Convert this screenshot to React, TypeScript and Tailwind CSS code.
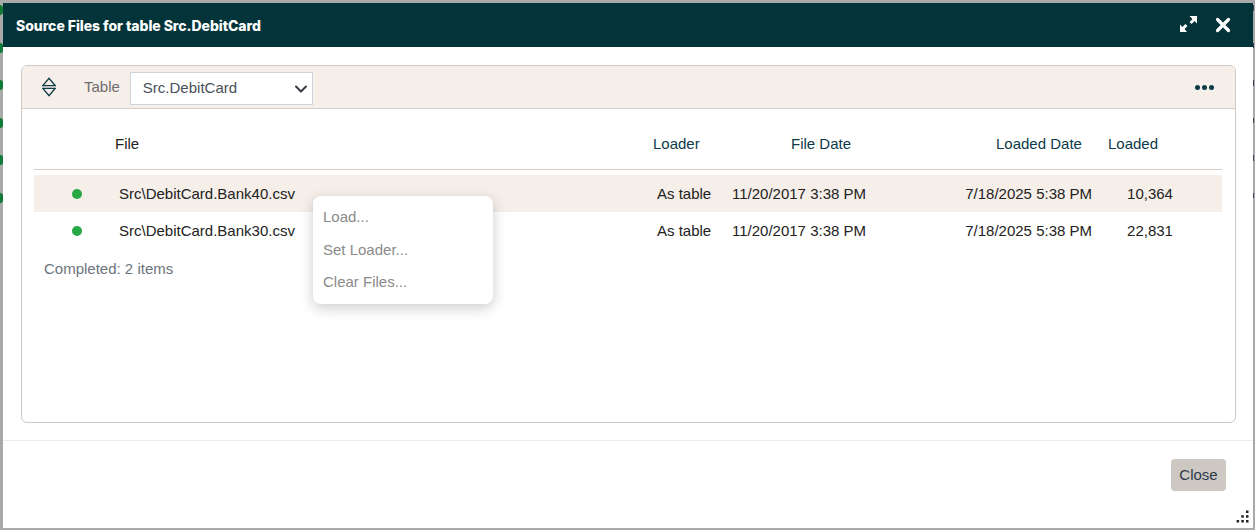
import React from "react";

const grid = "grid grid-cols-[77px_538px_79px_234px_138px_80px_1fr]";

function Row({ file, count, selected }: { file: string; count: string; selected?: boolean }) {
  return (
    <div className={`${grid} h-[37px] items-center text-[#222222] ${selected ? "bg-[#f5eee9]" : ""}`}>
      <div className="flex justify-center pl-[9px]">
        <span className="h-[10px] w-[10px] rounded-full bg-[#28a745]" />
      </div>
      <div className="pl-[8px] pt-[2px]">{file}</div>
      <div className="pl-[8px] pt-[2px]">As table</div>
      <div className="pl-[4px] pt-[2px]">11/20/2017 3:38 PM</div>
      <div className="whitespace-nowrap pr-[8px] pt-[2px] text-right">7/18/2025 5:38 PM</div>
      <div className="pl-[20px] pt-[2px] text-center">{count}</div>
      <div />
    </div>
  );
}

export default function App() {
  return (
    <div className="relative h-[530px] w-[1255px] overflow-hidden bg-[#a9a9a9] font-['Liberation_Sans',Arial,sans-serif] text-[15px]">
      <div className="absolute left-0 top-[5px] flex flex-col gap-[27.6px]">
        {[0, 1, 2, 3, 4, 5].map((i) => (
          <span key={i} className="block h-[10px] w-[3px] rounded-r-full bg-[#0f7a36]" />
        ))}
      </div>
      <div className="absolute right-[1px] top-[5px] flex flex-col gap-[32px]">
        {[0, 1, 2, 3, 4, 5].map((i) => (
          <span key={i} className="block h-[5.5px] w-[1px] bg-[#3a3f5c]" />
        ))}
      </div>
      <div className="pl-[3px] pt-[3px]">
        <div className="relative flex h-[525px] w-[1250px] flex-col bg-white">
          <header className="flex h-[44px] shrink-0 items-center justify-between bg-[#023439] pl-[13px] pr-[22px] text-white">
            <h1 className="font-['Inter',sans-serif] text-[14px] font-extrabold tracking-[-0.05px]">Source Files for table Src.DebitCard</h1>
            <div className="flex items-center gap-[18px]">
              <svg className="mb-[2px]" width="17" height="16" viewBox="0 0 17 16" fill="#fff" aria-hidden="true">
                <path d="M9.5 0h7.5v7.5l-2.4-2.4-3 3-2.1-2.1 3-3z" />
                <path d="M0 16V8.5l2.4 2.4 3-3 2.1 2.1-3 3L7 16z" />
              </svg>
              <svg width="16" height="16" viewBox="0 0 16 16" aria-hidden="true">
                <path d="M2.5 2.5l11 11M13.5 2.5l-11 11" stroke="#fff" strokeWidth="3.2" strokeLinecap="round" />
              </svg>
            </div>
          </header>

          <main className="flex-1 pl-[18px] pr-[17px] pt-[18px]">
            <section className="h-[358px] overflow-hidden rounded-[6px] border border-[#cfcac5]">
              <div className="flex h-[43px] items-center justify-between border-b border-[#d3cec9] bg-[#f5eee9] pl-[20px] pr-[21px]">
                <div className="flex items-center">
                  <svg width="14" height="20" viewBox="0 0 14 20" fill="none" stroke="#0c3a45" strokeWidth="1.4" aria-hidden="true">
                    <path d="M0.8 8.6L7 1.4l6.2 7.2z" />
                    <path d="M0.8 11.4L7 18.6l6.2-7.2z" />
                  </svg>
                  <span className="ml-[28px] text-[#6d6d6d]">Table</span>
                  <div className="ml-[10px] mt-[3px] flex h-[33px] w-[183px] items-center justify-between border border-[#ced4da] bg-white pl-[12px] pr-[3px] text-[#495057]">
                    <span>Src.DebitCard</span>
                    <svg width="16" height="16" viewBox="0 0 16 16" fill="none" stroke="#343a40" strokeWidth="2" strokeLinecap="round" strokeLinejoin="round" aria-hidden="true">
                      <path d="M3 5.5l5 5 5-5" />
                    </svg>
                  </div>
                </div>
                <div className="flex gap-[2px]">
                  <span className="h-[5px] w-[5px] rounded-full bg-[#0c3a45]" />
                  <span className="h-[5px] w-[5px] rounded-full bg-[#0c3a45]" />
                  <span className="h-[5px] w-[5px] rounded-full bg-[#0c3a45]" />
                </div>
              </div>

              <div className="pl-[12px] pr-[13px]">
                <div className={`${grid} h-[61px] items-center border-b border-[#d3cec9] pt-[10px] text-[#0c3a4a]`}>
                  <div />
                  <div className="pl-[4px] text-[#222222]">File</div>
                  <div className="pl-[4px]">Loader</div>
                  <div className="pl-[63px]">File Date</div>
                  <div className="whitespace-nowrap pl-[34px]">Loaded Date</div>
                  <div className="pl-[8px]">Loaded</div>
                  <div />
                </div>
                <div className="pt-[5px]">
                  <Row selected file="Src\DebitCard.Bank40.csv" count="10,364" />
                  <Row file="Src\DebitCard.Bank30.csv" count="22,831" />
                </div>
                <div className="pl-[10px] pt-[9px] text-[#6c757d]">Completed: 2 items</div>
              </div>
            </section>
          </main>

          <footer className="flex h-[88px] shrink-0 items-start justify-end border-t border-[#ebebeb] pr-[27px] pt-[18px]">
            <button className="h-[32px] w-[55px] rounded-[4px] bg-[#cdc8c2] text-[#2b3a4a]">Close</button>
          </footer>

          <svg className="absolute bottom-[5px] right-[4px]" width="13" height="13" viewBox="0 0 13 13" fill="#222" aria-hidden="true">
            <rect x="10" y="0.5" width="2.5" height="2.5" />
            <rect x="5.3" y="5.2" width="2.5" height="2.5" />
            <rect x="10" y="5.2" width="2.5" height="2.5" />
            <rect x="0.6" y="10" width="2.5" height="2.5" />
            <rect x="5.3" y="10" width="2.5" height="2.5" />
            <rect x="10" y="10" width="2.5" height="2.5" />
          </svg>

          <div className="absolute left-[310px] top-[193px] w-[180px] rounded-[8px] bg-white pb-[7px] pt-[5px] text-[#8a8a8a] shadow-[0_4px_14px_rgba(0,0,0,0.2)]">
            <div className="flex h-[33px] items-center px-[10px]">Load...</div>
            <div className="flex h-[33px] items-center px-[10px]">Set Loader...</div>
            <div className="flex h-[30px] items-center px-[10px]">Clear Files...</div>
          </div>
        </div>
      </div>
    </div>
  );
}
